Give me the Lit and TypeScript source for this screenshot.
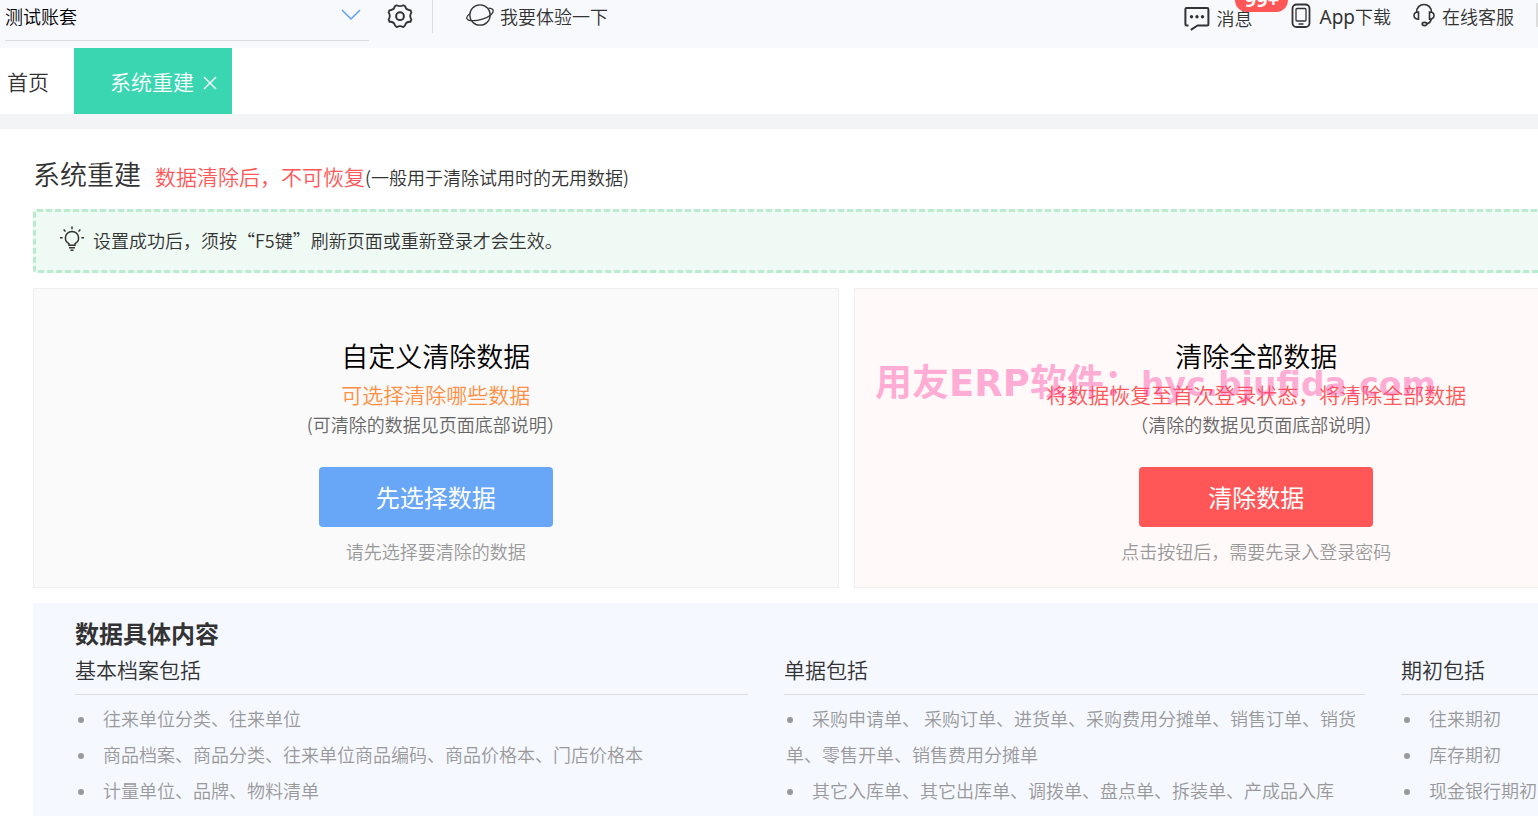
import { LitElement, html, css, svg } from "lit";
import { customElement } from "lit/decorators.js";

const gearIcon = svg`<svg class="icon" width="26" height="26" viewBox="0 0 26 26" fill="none" stroke="#333" stroke-width="1.8" stroke-linejoin="round"><path d="M9.600 2.200Q13 4.200 16.400 2.200L18.200 3.200Q18.600 6.600 21.800 7L23.600 7.400L24.400 9.600Q22 13 24.400 16.600L23.400 18.800Q19.200 18.400 17.900 22.600L16.200 24.200Q13 22.200 9.800 24.200L8.100 22.600Q6.800 18.400 2.600 18.800L1.600 16.600Q4 13 1.600 9.600L2.400 7.400L4.200 7Q7.400 6.600 7.800 3.200Z"/><circle cx="13" cy="13.200" r="3.900" stroke-width="2"/></svg>`;
const planetIcon = svg`<svg class="icon" width="28" height="24" viewBox="0 0 28 24" fill="none" stroke="#333" stroke-width="1.300"><circle cx="14" cy="12" r="10.200"/><path d="M4 10.800C1.500 12.300.300 14 .800 15.400c1.200 2.900 8.400 3 15.600.700s11.500-6 10.700-8.800c-.400-1.400-2-2.100-4.600-2.200"/></svg>`;
const messageIcon = svg`<svg class="icon" width="26" height="26" viewBox="0 0 26 26" fill="none" stroke="#333" stroke-width="2" stroke-linejoin="round"><path d="M4.500 19.500H2.600q-1.200 0-1.200-1.200V3.200Q1.400 2 2.600 2h20.600q1.200 0 1.200 1.200v15.100q0 1.200-1.200 1.200H13.500l-6.700 4.300"/><g fill="#333" stroke="none"><circle cx="7.500" cy="10.800" r="1.700"/><circle cx="13" cy="10.800" r="1.700"/><circle cx="18.500" cy="10.800" r="1.700"/></g></svg>`;
const phoneIcon = svg`<svg class="icon" width="20" height="26" viewBox="0 0 20 26" fill="none" stroke="#333"><rect x="1.500" y="1.500" width="17" height="22.500" rx="4" stroke-width="1.800"/><rect x="5" y="5.500" width="10" height="12.500" rx="1" stroke-width="1.300"/><path d="M7.500 21h5" stroke-width="1.500"/></svg>`;
const headsetIcon = svg`<svg class="icon" width="22" height="24" viewBox="0 0 22 24" fill="none" stroke="#333" stroke-width="1.600"><path d="M3.500 9.500C3.500 4.500 6.800 1.500 11 1.500s7.500 3 7.500 8"/><path d="M5.500 9v7.200C3 16.200 1 15 1 12.600S3 9 5.500 9zM16.500 9v7.200c2.500 0 4.500-1.200 4.500-3.600S19 9 16.500 9z"/><path d="M18.300 16c-.500 2.600-2 4.300-4.600 5"/><ellipse cx="11.500" cy="21" rx="2.300" ry="1.600"/></svg>`;
const bulbIcon = svg`<svg class="icon" width="26" height="26" viewBox="0 0 26 26" fill="none" stroke="#333" stroke-width="1.500"><path d="M10 19.200v-1.600C7.800 16.500 6.400 14.500 6.400 12a6.600 6.600 0 0 1 13.200 0c0 2.500-1.400 4.500-3.600 5.600v1.600z"/><path d="M10 21.700h6M11.500 24.200h3M13 .5v2.700M4.600 3.600l1.900 2M21.400 3.600l-1.900 2M1 11.700h2.700M22.300 11.700H25"/></svg>`;
const chevronIcon = svg`<svg class="chevron" width="20" height="12" viewBox="0 0 20 12" fill="none" stroke="#5ea2f5" stroke-width="1.500"><path d="M1 1l9 9 9-9"/></svg>`;
const closeIcon = svg`<svg width="14" height="14" viewBox="0 0 14 14" fill="none" stroke="#fff" stroke-width="1.400"><path d="M1 1l12 12M13 1L1 13"/></svg>`;

const groups = [
  {
    title: "基本档案包括",
    items: [
      "往来单位分类、往来单位",
      "商品档案、商品分类、往来单位商品编码、商品价格本、门店价格本",
      "计量单位、品牌、物料清单",
    ],
  },
  {
    title: "单据包括",
    items: [
      "采购申请单、 采购订单、进货单、采购费用分摊单、销售订单、销货单、零售开单、销售费用分摊单",
      "其它入库单、其它出库单、调拨单、盘点单、拆装单、产成品入库",
    ],
  },
  { title: "期初包括", items: ["往来期初", "库存期初", "现金银行期初"] },
];

@customElement("app-root")
export class AppRoot extends LitElement {
  static styles = css`
    :host {
      display: flex;
      flex-direction: column;
      height: 100vh;
      overflow: hidden;
      position: relative;
      background: #fff;
      color: #333;
      font: 350 18px/28px "Noto Sans CJK SC", "Noto Sans", sans-serif;
    }
    * { box-sizing: border-box; }
    h1, h2, h3, p, ul { margin: 0; padding: 0; font-weight: inherit; }
    a { color: inherit; text-decoration: none; }
    button, select { font: inherit; border: 0; cursor: pointer; }
    .icon { flex: none; display: block; }

    .topbar {
      flex: none;
      display: flex;
      align-items: flex-start;
      height: 48px;
      padding-left: 5px;
      background: #f8f9fd;
    }
    .account {
      width: 364px;
      height: 41px;
      display: grid;
      align-items: start;
      border-bottom: 1px solid #ddd;
    }
    .account select {
      grid-area: 1 / 1;
      appearance: none;
      width: 100%;
      height: 32px;
      padding: 0;
      background: none;
      color: #000;
      outline: none;
    }
    .chevron {
      grid-area: 1 / 1;
      justify-self: end;
      margin: 9px 8px 0 0;
      pointer-events: none;
    }
    .gear {
      height: 33px;
      padding: 0 19px 2px 18px;
      background: none;
      border-right: 1px solid #ddd;
    }
    .link { display: flex; align-items: center; height: 32px; gap: 7px; position: relative; }
    .try { margin-left: 33px; gap: 6px; }
    .try .icon { margin-bottom: 2px; }
    .links { display: flex; align-items: flex-start; margin-left: auto; }
    .message { margin-right: 39px; padding-top: 3px; gap: 6px; }
    .message .icon { margin-top: 2px; }
    .download { margin-right: 22px; gap: 8px; }
    .latin { font-family: "Noto Sans", sans-serif; font-size: 19px; font-weight: 400; }
    .service { margin-right: 22px; }
    .service .icon { margin-bottom: 3px; }
    .badge {
      position: absolute;
      left: 51px;
      top: -12px;
      width: 53px;
      height: 24px;
      border-radius: 12px;
      background: #ff5757;
      color: #fff;
      font: 700 20px/24px "Noto Sans", sans-serif;
      text-align: center;
    }
    .edge { width: 2px; height: 24px; margin-top: 3px; background: #ddd; }

    .tabs {
      flex: none;
      display: flex;
      align-items: center;
      height: 81px;
      border-bottom: 15px solid #f2f4f5;
      font-size: 21px;
    }
    .home { padding: 0 25px 0 7px; }
    .tab {
      display: flex;
      align-items: center;
      height: 66px;
      padding: 0 15px 0 36px;
      gap: 9px;
      background: #3ad6b2;
      color: #fff;
    }
    .close { display: flex; padding: 4px 0 0; background: none; }

    .page {
      flex: 1;
      display: flex;
      flex-direction: column;
      gap: 15px;
      margin-right: -121px;
      padding: 25px 0 0 33px;
    }
    .heading { display: flex; align-items: baseline; height: 40px; line-height: 40px; }
    .heading h1 { font-size: 27px; margin-right: 14px; }
    .danger { color: #ff5757; font-size: 21px; }
    .tip {
      display: flex;
      align-items: center;
      gap: 8px;
      height: 64px;
      padding: 0 23px 2px;
      border: 3px dashed #b9ebd0;
      border-radius: 4px;
      background: #f0faf5;
    }
    .tip .icon { margin-bottom: 2px; }
    .cards { display: grid; grid-template-columns: 1fr 1fr; gap: 15px; }
    .card {
      display: flex;
      flex-direction: column;
      align-items: center;
      padding: 47px 0 18px;
      border: 1px solid #eee;
      background: #fafafa;
    }
    .card.all { background: #fff9f9; }
    .card h2 { font-size: 27px; line-height: 40px; color: #000; }
    .lead { font-size: 21px; line-height: 36px; color: #ff8f43; }
    .all .lead { color: #ff5757; }
    .scope { line-height: 24px; color: #666; }
    .action {
      width: 234px;
      height: 60px;
      margin: 31px 0 6px;
      border-radius: 4px;
      background: #68a6f8;
      color: #fff;
      font-size: 24px;
      font-weight: 400;
    }
    .all .action { background: #ff5757; }
    .note { line-height: 36px; color: #999; }

    .details {
      flex: 1;
      padding: 12px 42px 0;
      background: #f5f8ff;
    }
    .details h2 { font-size: 24px; line-height: 36px; font-weight: 700; }
    .columns { display: grid; grid-template-columns: 673fr 581fr 216fr; gap: 36px; }
    .columns h3 {
      font-size: 21px;
      line-height: 36px;
      height: 44px;
      border-bottom: 1px solid #ddd;
    }
    .columns ul { list-style: none; margin-top: 5px; padding-left: 2px; line-height: 36px; color: #999; }
    .columns li::before {
      content: "";
      display: inline-block;
      width: 6px;
      height: 6px;
      margin: 0 19px 3px 1px;
      border-radius: 50%;
      background: #999;
    }
    .watermark {
      position: absolute;
      left: 875px;
      top: 356px;
      color: rgba(255, 64, 160, 0.42);
      font-size: 37px;
      font-weight: 700;
      line-height: 48px;
      white-space: nowrap;
      pointer-events: none;
    }
    .brand { font-family: "DejaVu Sans", sans-serif; }
    .site { font-family: "DejaVu Sans", sans-serif; font-size: 33px; }
  `;

  render() {
    return html`
      <header class="topbar">
        <div class="account">
          <select aria-label="账套"><option>测试账套</option></select>
          ${chevronIcon}
        </div>
        <button class="gear" aria-label="设置">${gearIcon}</button>
        <a class="link try" href="#">${planetIcon}我要体验一下</a>
        <nav class="links">
          <a class="link message" href="#">${messageIcon}消息<span class="badge">99+</span></a>
          <a class="link download" href="#">${phoneIcon}<span><span class="latin">App</span>下载</span></a>
          <a class="link service" href="#">${headsetIcon}在线客服</a>
          <span class="edge"></span>
        </nav>
      </header>
      <nav class="tabs">
        <a class="home" href="#">首页</a>
        <div class="tab">系统重建<button class="close" aria-label="关闭">${closeIcon}</button></div>
      </nav>
      <main class="page">
        <div class="heading">
          <h1>系统重建</h1>
          <span class="danger">数据清除后，不可恢复</span>
          <span>(一般用于清除试用时的无用数据)</span>
        </div>
        <div class="tip">${bulbIcon}<p>设置成功后，须按“F5键”刷新页面或重新登录才会生效。</p></div>
        <div class="cards">
          <section class="card">
            <h2>自定义清除数据</h2>
            <p class="lead">可选择清除哪些数据</p>
            <p class="scope">(可清除的数据见页面底部说明）</p>
            <button class="action">先选择数据</button>
            <p class="note">请先选择要清除的数据</p>
          </section>
          <section class="card all">
            <h2>清除全部数据</h2>
            <p class="lead">将数据恢复至首次登录状态，将清除全部数据</p>
            <p class="scope">（清除的数据见页面底部说明）</p>
            <button class="action">清除数据</button>
            <p class="note">点击按钮后，需要先录入登录密码</p>
          </section>
        </div>
        <section class="details">
          <h2>数据具体内容</h2>
          <div class="columns">
            ${groups.map(
              (g) => html`<div>
                <h3>${g.title}</h3>
                <ul>${g.items.map((i) => html`<li>${i}</li>`)}</ul>
              </div>`
            )}
          </div>
        </section>
      </main>
      <div class="watermark">用友<span class="brand">ERP</span>软件：<span class="site">hyc.bjufida.com</span></div>
    `;
  }
}
